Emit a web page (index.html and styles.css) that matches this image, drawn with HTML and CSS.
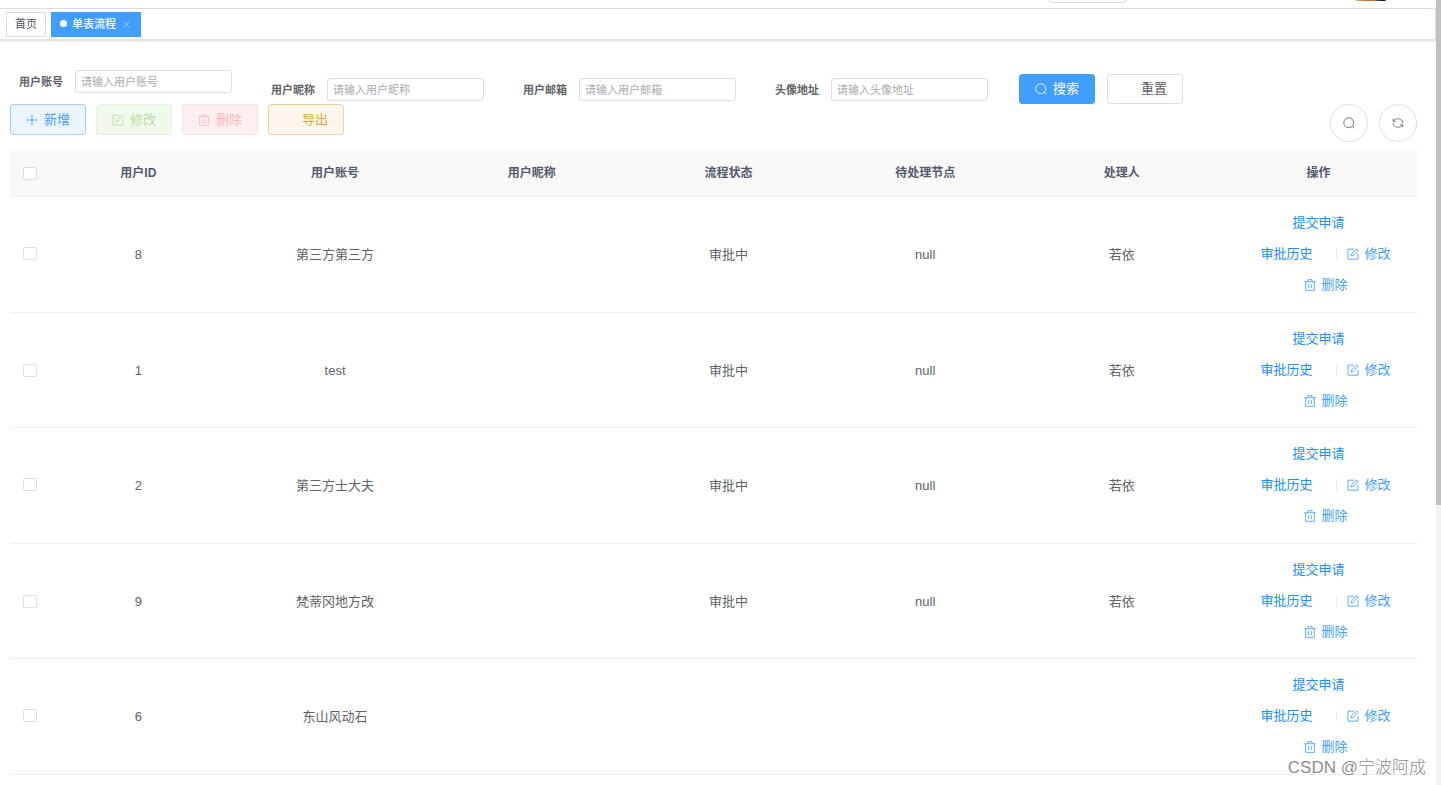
FILE: index.html
```
<!DOCTYPE html>
<html lang="zh-CN">
<head>
<meta charset="utf-8">
<title>单表流程</title>
<link rel="stylesheet" href="styles.css">
</head>
<body>
<svg class="sprite" aria-hidden="true">
  <symbol id="search" viewBox="0 0 14 14"><circle cx="6.7" cy="6.7" r="5.8"/><path d="M10.8 10.8l2.5 2.3"/></symbol>
  <symbol id="plus" viewBox="0 0 14 14"><path d="M7 .8v12.4M.8 7h12.4"/></symbol>
  <symbol id="edit" viewBox="0 0 14 14"><path d="M8 1.4H1.2v11.6h11.6V6.5M4.8 9.4l.5-2.6 6-5.8 1.8 1.8-5.9 5.8z"/></symbol>
  <symbol id="trash" viewBox="0 0 14 14"><path d="M.3 3.2h13.4M1.9 3.2v10h10.2v-10M4.6 3V.8h4.8V3M5.4 6v4.6M8.6 6v4.6"/></symbol>
  <symbol id="refresh" viewBox="0 0 14 14"><path d="M1.4 2v3h3M1.8 4.8C3.6 1.8 7.4 1.4 10 2.8 11.8 3.8 12.6 5.2 12.6 7.2M12.6 12V9h-3M12.2 9.2C10.4 12.2 6.6 12.6 4 11.2 2.2 10.2 1.4 8.8 1.4 6.8"/></symbol>
  <symbol id="close" viewBox="0 0 14 14"><path d="M1 1l12 12M13 1L1 13"/></symbol>
</svg>
<div class="app">
  <div class="page">
    <header class="navbar">
      <div class="size-box"></div>
      <div class="avatar"></div>
    </header>
    <nav class="tags">
      <a class="tag" href="#">首页</a>
      <a class="tag active" href="#"><span class="dot"></span>单表流程<svg class="close"><use href="#close"/></svg></a>
    </nav>
    <main class="content">
      <form class="query">
        <div class="field raised"><label for="account">用户账号</label><input id="account" type="text" placeholder="请输入用户账号"></div>
        <div class="field"><label for="nick">用户昵称</label><input id="nick" type="text" placeholder="请输入用户昵称"></div>
        <div class="field"><label for="email">用户邮箱</label><input id="email" type="text" placeholder="请输入用户邮箱"></div>
        <div class="field"><label for="photo">头像地址</label><input id="photo" type="text" placeholder="请输入头像地址"></div>
        <div class="query-buttons">
          <button class="btn primary" type="button"><svg class="icon"><use href="#search"/></svg>搜索</button>
          <button class="btn" type="button"><span class="icon"></span>重置</button>
        </div>
      </form>
      <div class="toolbar">
        <button class="btn add" type="button"><svg class="icon"><use href="#plus"/></svg>新增</button>
        <button class="btn modify" type="button" disabled><svg class="icon"><use href="#edit"/></svg>修改</button>
        <button class="btn remove" type="button" disabled><svg class="icon"><use href="#trash"/></svg>删除</button>
        <button class="btn export" type="button"><span class="icon"></span>导出</button>
        <div class="round-tools">
          <button class="round" type="button" aria-label="搜索"><svg class="icon"><use href="#search"/></svg></button>
          <button class="round" type="button" aria-label="刷新"><svg class="icon"><use href="#refresh"/></svg></button>
        </div>
      </div>
      <table class="list">
        <colgroup><col class="check-col"><col><col><col><col><col><col><col></colgroup>
        <thead>
          <tr><th class="check"><input type="checkbox" aria-label="全选"></th><th>用户ID</th><th>用户账号</th><th>用户昵称</th><th>流程状态</th><th>待处理节点</th><th>处理人</th><th>操作</th></tr>
        </thead>
        <tbody>
          <tr>
            <td class="check"><input type="checkbox" aria-label="选择 8"></td><td>8</td><td>第三方第三方</td><td></td><td>审批中</td><td>null</td><td>若依</td>
            <td class="ops"><div class="line"><button class="link strong" type="button">提交申请</button></div>
              <div class="line shifted"><button class="link strong history" type="button">审批历史</button><button class="link" type="button"><svg class="icon"><use href="#edit"/></svg>修改</button></div>
              <div class="line shifted"><button class="link" type="button"><svg class="icon"><use href="#trash"/></svg>删除</button></div></td>
          </tr>
          <tr>
            <td class="check"><input type="checkbox" aria-label="选择 1"></td><td>1</td><td>test</td><td></td><td>审批中</td><td>null</td><td>若依</td>
            <td class="ops"><div class="line"><button class="link strong" type="button">提交申请</button></div>
              <div class="line shifted"><button class="link strong history" type="button">审批历史</button><button class="link" type="button"><svg class="icon"><use href="#edit"/></svg>修改</button></div>
              <div class="line shifted"><button class="link" type="button"><svg class="icon"><use href="#trash"/></svg>删除</button></div></td>
          </tr>
          <tr>
            <td class="check"><input type="checkbox" aria-label="选择 2"></td><td>2</td><td>第三方士大夫</td><td></td><td>审批中</td><td>null</td><td>若依</td>
            <td class="ops"><div class="line"><button class="link strong" type="button">提交申请</button></div>
              <div class="line shifted"><button class="link strong history" type="button">审批历史</button><button class="link" type="button"><svg class="icon"><use href="#edit"/></svg>修改</button></div>
              <div class="line shifted"><button class="link" type="button"><svg class="icon"><use href="#trash"/></svg>删除</button></div></td>
          </tr>
          <tr>
            <td class="check"><input type="checkbox" aria-label="选择 9"></td><td>9</td><td>梵蒂冈地方改</td><td></td><td>审批中</td><td>null</td><td>若依</td>
            <td class="ops"><div class="line"><button class="link strong" type="button">提交申请</button></div>
              <div class="line shifted"><button class="link strong history" type="button">审批历史</button><button class="link" type="button"><svg class="icon"><use href="#edit"/></svg>修改</button></div>
              <div class="line shifted"><button class="link" type="button"><svg class="icon"><use href="#trash"/></svg>删除</button></div></td>
          </tr>
          <tr>
            <td class="check"><input type="checkbox" aria-label="选择 6"></td><td>6</td><td>东山风动石</td><td></td><td></td><td></td><td></td>
            <td class="ops"><div class="line"><button class="link strong" type="button">提交申请</button></div>
              <div class="line shifted"><button class="link strong history" type="button">审批历史</button><button class="link" type="button"><svg class="icon"><use href="#edit"/></svg>修改</button></div>
              <div class="line shifted"><button class="link" type="button"><svg class="icon"><use href="#trash"/></svg>删除</button></div></td>
          </tr>
        </tbody>
      </table>
    </main>
  </div>
  <div class="scroll-track"><div class="scroll-thumb"></div></div>
</div>
<div class="watermark">CSDN @宁波阿成</div>
</body>
</html>
```

FILE: styles.css
```
* { box-sizing: border-box; }

body {
  margin: 0;
  background: #fff;
  color: #606266;
  font: 13px/20px "Liberation Sans", "Noto Sans CJK SC", sans-serif;
}

button, input { font: inherit; }
button { cursor: pointer; white-space: nowrap; }
button:disabled { cursor: not-allowed; }

.sprite { position: absolute; width: 0; height: 0; }

.icon, .close {
  flex: none;
  fill: none;
  stroke: currentColor;
  stroke-width: 1;
}
.icon { width: 12px; height: 12px; }

.app { display: flex; min-height: 100vh; }
.page { flex: 1; min-width: 0; }

.scroll-track { width: 5px; background: #f1f1f1; }
.scroll-thumb { height: 505px; background: #c1c1c1; }

/* Top bar, scrolled almost out of view */
.navbar {
  display: flex;
  justify-content: flex-end;
  align-items: flex-start;
  height: 8px;
  padding-right: 50px;
  gap: 230px;
}
.size-box {
  width: 77px;
  height: 3px;
  border: 1px solid #dcdfe6;
  border-top: 0;
  border-radius: 0 0 3px 3px;
}
.avatar {
  width: 30px;
  height: 1px;
  border-radius: 0 0 4px 4px;
  background: linear-gradient(90deg, #d8a060, #b87020 40%, #c08030 60%, #201810 85%);
}

.tags {
  display: flex;
  gap: 5px;
  padding: 3px 6px 2px;
  border: 1px solid #d8dce5;
  border-left: 0;
  border-bottom: 2px solid #e4e4e4;
  box-shadow: 0 1px 2px rgba(0, 0, 0, .06);
  font-size: 11px;
}
.tag {
  display: flex;
  align-items: center;
  height: 25px;
  padding: 0 8px 2px;
  border: 1px solid #d8dce5;
  color: #495060;
  text-decoration: none;
}
.tag.active {
  border-color: #409eff;
  background: #409eff;
  color: #fff;
  font-weight: 500;
}
.dot { width: 7px; height: 7px; margin-right: 5px; border-radius: 50%; background: #fff; }
.close { width: 7px; height: 7px; margin: 2px 2px 0 7px; }

.content { padding: 29px 19px 0 10px; }

.query {
  display: flex;
  align-items: flex-end;
  min-height: 34px;
}
.field {
  display: flex;
  align-items: center;
  margin: 0 30px 3px 0;
}
.field.raised { align-self: flex-start; margin: 0 30px 0 0; }
.field label {
  width: 65px;
  padding-right: 12px;
  font-size: 11px;
  font-weight: 700;
  text-align: right;
  white-space: nowrap;
}
.field input {
  width: 157px;
  height: 23px;
  padding: 0 5px;
  border: 1px solid #dcdfe6;
  border-radius: 3px;
  background: #fff;
  color: #606266;
  font-size: 11px;
}
.field input::placeholder { color: #a8abb2; opacity: 1; }
.query-buttons { display: flex; gap: 12px; padding-left: 1px; }

.btn {
  display: flex;
  align-items: center;
  justify-content: center;
  gap: 6px;
  width: 76px;
  height: 30px;
  padding: 0;
  border: 1px solid #dcdfe6;
  border-radius: 3px;
  background: #fff;
  color: #606266;
}
.primary { border-color: #409eff; background: #409eff; color: #fff; }
.add { border-color: #9fceff; background: #ecf5ff; color: #409eff; }
.modify { border-color: #e1f3d8; background: #f0f9eb; color: #b3e19d; }
.remove { border-color: #fde2e2; background: #fef0f0; color: #fab6b6; }
.export { border-color: #f3d19e; background: #fdf6ec; color: #e6a23c; }

.toolbar {
  display: flex;
  align-items: flex-start;
  gap: 10px;
  margin-bottom: 8px;
}
.toolbar .btn { height: 31px; }
.round-tools { display: flex; gap: 11px; margin-left: auto; }
.round {
  display: flex;
  align-items: center;
  justify-content: center;
  width: 38px;
  height: 38px;
  padding: 0;
  border: 1px solid #dcdfe6;
  border-radius: 50%;
  background: #fff;
  color: #606266;
}

.list {
  width: 100%;
  table-layout: fixed;
  border-spacing: 0;
  text-align: center;
}
.check-col { width: 30px; }
.list th {
  height: 47px;
  padding: 0;
  border-bottom: 1px solid #ebeef5;
  background: #f8f8f9;
  color: #515a6e;
  font-size: 12px;
  font-weight: 700;
}
.list td { padding: 11px 0; border-bottom: 1px solid #ebeef5; }
.list tr:nth-child(even) td { padding-bottom: 10px; }
.list .ops { padding: 10px 0 12px; }
.list tr:nth-child(even) .ops { padding-bottom: 11px; }
.list .check { padding-left: 13px; text-align: left; }
.list td.check { padding-bottom: 13px; }
.check input {
  appearance: none;
  display: block;
  width: 14px;
  height: 13px;
  margin: 0;
  border: 1px solid #dcdfe6;
  border-radius: 2px;
  background: #fff;
}

.line {
  display: flex;
  align-items: center;
  justify-content: center;
  height: 31px;
}
.shifted { padding-left: 14px; }
.link {
  display: flex;
  align-items: center;
  gap: 6px;
  padding: 0;
  border: 0;
  background: none;
  color: #409eff;
}
.strong { color: #1890ff; }
.history::after {
  content: "";
  width: 1px;
  height: 12px;
  margin: 0 10px 0 17px;
  background: #ebeef5;
}

.watermark {
  position: absolute;
  right: 15px;
  bottom: 5px;
  color: #8c8c8c;
  font-size: 17px;
  font-weight: 300;
  line-height: 24px;
  text-shadow: 0 0 1px #fff;
  pointer-events: none;
}
```
